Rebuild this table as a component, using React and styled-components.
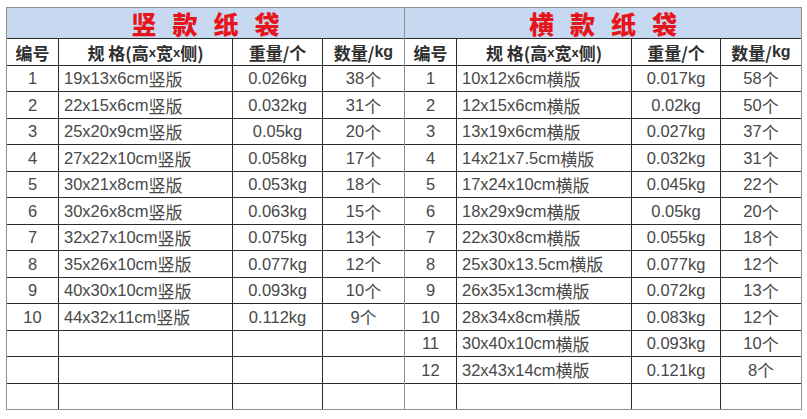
import React from "react";
import styled, { createGlobalStyle } from "styled-components";

const Global = createGlobalStyle`
  html, body { margin: 0; padding: 0; background: #ffffff; }
  body { width: 807px; height: 419px; overflow: hidden; }
`;

const Page = styled.div`
  width: 807px;
  height: 419px;
  box-sizing: border-box;
  padding: 7px 5px 9px 6px;
  display: flex;
  background: #fff;
`;

const Panel = styled.div`
  flex: 0 0 ${(p) => p.$width}px;
  box-sizing: border-box;
  height: 403px;
  display: grid;
  grid-template-columns: ${(p) => p.$cols};
  grid-template-rows: 30px 26px repeat(13, 1fr);
  gap: 1px;
  background: #2c2c2c;
  border: 1.5px solid #8f8f8f;
  border-left: ${(p) => (p.$noLeft ? "none" : "1.5px solid #8f8f8f")};
`;

const Title = styled.div`
  grid-column: 1 / -1;
  background: #c6d9f1;
  display: flex;
  align-items: center;
  justify-content: center;
  color: #e8141c;
  font-family: "Noto Sans CJK SC", sans-serif;
  font-weight: 900;
  font-size: 25px;
  letter-spacing: 16px;
  text-indent: 16px;
  line-height: 1;
`;

const Head = styled.div`
  background: #fff;
  display: flex;
  align-items: center;
  justify-content: center;
  color: #2e2e2e;
  font-family: "Noto Sans CJK SC", sans-serif;
  font-weight: 700;
  font-size: 17px;
  line-height: 1;
  white-space: nowrap;
`;

const Small = styled.span`
  font-size: ${(p) => (p.$size ? p.$size : 13)}px;
  font-family: "Liberation Sans", sans-serif;
  font-weight: 700;
`;

const Cell = styled.div`
  background: #fff;
  display: flex;
  align-items: center;
  justify-content: ${(p) => (p.$left ? "flex-start" : "center")};
  padding-left: ${(p) => (p.$left ? "5px" : "0")};
  color: #484848;
  font-family: "Liberation Sans", "Noto Sans CJK SC", sans-serif;
  font-size: 16.5px;
  line-height: 1;
  white-space: nowrap;
`;

const Cjk = styled.span`
  font-family: "Noto Sans CJK SC", sans-serif;
  font-size: 17px;
`;

const vertical = [
  ["19x13x6cm", "0.026kg", "38"],
  ["22x15x6cm", "0.032kg", "31"],
  ["25x20x9cm", "0.05kg", "20"],
  ["27x22x10cm", "0.058kg", "17"],
  ["30x21x8cm", "0.053kg", "18"],
  ["30x26x8cm", "0.063kg", "15"],
  ["32x27x10cm", "0.075kg", "13"],
  ["35x26x10cm", "0.077kg", "12"],
  ["40x30x10cm", "0.093kg", "10"],
  ["44x32x11cm", "0.112kg", "9"],
];

const horizontal = [
  ["10x12x6cm", "0.017kg", "58"],
  ["12x15x6cm", "0.02kg", "50"],
  ["13x19x6cm", "0.027kg", "37"],
  ["14x21x7.5cm", "0.032kg", "31"],
  ["17x24x10cm", "0.045kg", "22"],
  ["18x29x9cm", "0.05kg", "20"],
  ["22x30x8cm", "0.055kg", "18"],
  ["25x30x13.5cm", "0.077kg", "12"],
  ["26x35x13cm", "0.072kg", "13"],
  ["28x34x8cm", "0.083kg", "12"],
  ["30x40x10cm", "0.093kg", "10"],
  ["32x43x14cm", "0.121kg", "8"],
];

function Table({ title, suffix, rows, cols, width, noLeft }) {
  const empties = 13 - rows.length;
  return (
    <Panel $cols={cols} $width={width} $noLeft={noLeft}>
      <Title>{title}</Title>
      <Head>编号</Head>
      <Head>
        规 格(高<Small>x</Small>宽<Small>x</Small>侧)
      </Head>
      <Head>重量/个</Head>
      <Head>
        数量/<Small $size={16}>kg</Small>
      </Head>
      {rows.map((r, i) => (
        <React.Fragment key={i}>
          <Cell>{i + 1}</Cell>
          <Cell $left>
            {r[0]}
            <Cjk>{suffix}</Cjk>
          </Cell>
          <Cell>{r[1]}</Cell>
          <Cell>
            {r[2]}
            <Cjk>个</Cjk>
          </Cell>
        </React.Fragment>
      ))}
      {Array.from({ length: empties }).map((_, i) => (
        <React.Fragment key={"e" + i}>
          <Cell />
          <Cell />
          <Cell />
          <Cell />
        </React.Fragment>
      ))}
    </Panel>
  );
}

export default function App() {
  return (
    <>
      <Global />
      <Page>
        <Table
          title="竖款纸袋"
          suffix="竖版"
          rows={vertical}
          cols="51px 173px 89px 1fr"
          width={399}
        />
        <Table
          title="横款纸袋"
          suffix="横版"
          rows={horizontal}
          cols="51px 174px 88px 1fr"
          width={397}
          noLeft
        />
      </Page>
    </>
  );
}
